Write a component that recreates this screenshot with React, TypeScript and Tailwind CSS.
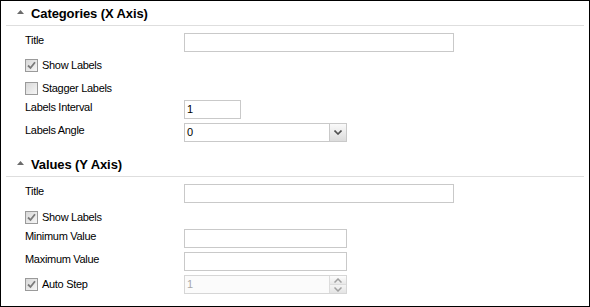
import React from "react";

function Triangle() {
  return (
    <svg width="7" height="4" viewBox="0 0 7 4" className="mr-[7px] mb-[3px] shrink-0">
      <polygon points="0,4 7,4 3.5,0" fill="#6b6b6b" />
    </svg>
  );
}

function Header({ text, className }: { text: string; className?: string }) {
  return (
    <div className={"flex items-center h-[25px] border-b border-[#dedede] pl-[11px] " + (className || "")}>
      <Triangle />
      <span className="text-[13px] font-bold leading-[16px] tracking-[-0.1px] pt-[2px]">{text}</span>
    </div>
  );
}

function Label({ text }: { text: string }) {
  return (
    <div className="w-[178px] shrink-0 pl-[19px] pb-[4px]">{text}</div>
  );
}

function TextInput({ w, value }: { w: string; value?: string }) {
  return (
    <div className={"h-[19px] border border-[#c9c9c9] bg-white flex items-center pl-[2px] " + w}>
      {value}
    </div>
  );
}

function Check({ text, className }: { text: string; className?: string }) {
  return (
    <div className={"flex items-center h-[19px] pl-[19px] " + (className || "")}>
      <div className="w-[13px] h-[13px] border border-[#9a9a9a] bg-gradient-to-br from-[#d8d8d8] to-[#f6f6f6] flex items-center justify-center mr-[4px]">
        {text !== "Stagger Labels" && (
          <svg width="9" height="9" viewBox="0 0 9 9">
            <path d="M1 4.5 L3.5 7 L8 1.2" stroke="#7a7a7a" strokeWidth="1.8" fill="none" />
          </svg>
        )}
      </div>
      <span className="pb-[1px]">{text}</span>
    </div>
  );
}

function Row({ label, children, className }: { label: string; children: React.ReactNode; className?: string }) {
  return (
    <div className={"flex items-center h-[19px] " + (className || "")}>
      <Label text={label} />
      {children}
    </div>
  );
}

export default function App() {
  return (
    <div className="w-[590px] h-[307px] border border-black bg-white px-[5px] font-['Liberation_Sans',Arial,sans-serif] text-[11px] tracking-[-0.3px] text-black overflow-hidden">
      <Header text="Categories (X Axis)" />
      <Row label="Title" className="mt-[7px]">
        <TextInput w="w-[270px]" />
      </Row>
      <Check text="Show Labels" className="mt-[4px]" />
      <Check text="Stagger Labels" className="mt-[4px]" />
      <Row label="Labels Interval" className="mt-[2px]">
        <TextInput w="w-[57px]" value="1" />
      </Row>
      <Row label="Labels Angle" className="mt-[4px]">
        <div className="w-[163px] h-[19px] border border-[#c9c9c9] bg-white flex items-center">
          <span className="flex-1 pl-[2px]">0</span>
          <div className="w-[17px] h-[17px] border-l border-[#c9c9c9] bg-gradient-to-b from-[#fafafa] to-[#dcdcdc] flex items-center justify-center">
            <svg width="8" height="5" viewBox="0 0 8 5">
              <path d="M0.5 0.5 L4 4 L7.5 0.5" stroke="#505050" strokeWidth="1.6" fill="none" />
            </svg>
          </div>
        </div>
      </Row>
      <Header text="Values (Y Axis)" className="mt-[10px]" />
      <Row label="Title" className="mt-[7px]">
        <TextInput w="w-[270px]" />
      </Row>
      <Check text="Show Labels" className="mt-[5px]" />
      <Row label="Minimum Value" className="mt-[2px]">
        <TextInput w="w-[163px]" />
      </Row>
      <Row label="Maximum Value" className="mt-[4px]">
        <TextInput w="w-[163px]" />
      </Row>
      <div className="flex items-center h-[19px] mt-[4px]">
        <div className="w-[178px] shrink-0">
          <Check text="Auto Step" />
        </div>
        <div className="w-[163px] h-[19px] border border-[#d6d6d6] bg-[#fbfbfb] flex items-center text-[#a8a8a8]">
          <span className="flex-1 pl-[2px]">1</span>
          <div className="w-[17px] h-[17px] flex flex-col">
            <div className="h-[9px] border-l border-b border-[#dcdcdc] bg-gradient-to-b from-[#fdfdfd] to-[#e8e8e8] flex items-center justify-center">
              <svg width="8" height="5" viewBox="0 0 8 5">
                <path d="M0.5 4.5 L4 1 L7.5 4.5" stroke="#a0a0a0" strokeWidth="1.5" fill="none" />
              </svg>
            </div>
            <div className="h-[8px] border-l border-[#dcdcdc] bg-gradient-to-b from-[#f4f4f4] to-[#e4e4e4] flex items-center justify-center">
              <svg width="8" height="5" viewBox="0 0 8 5">
                <path d="M0.5 0.5 L4 4 L7.5 0.5" stroke="#a0a0a0" strokeWidth="1.5" fill="none" />
              </svg>
            </div>
          </div>
        </div>
      </div>
    </div>
  );
}
